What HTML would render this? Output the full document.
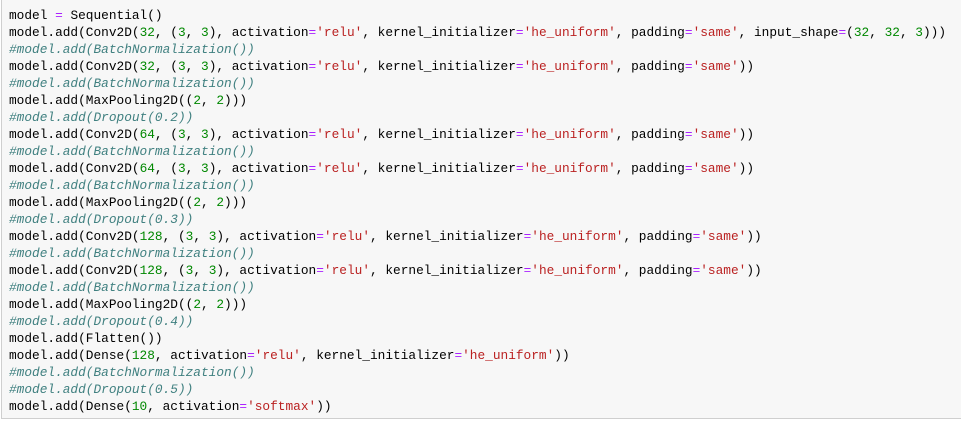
<!DOCTYPE html>
<html><head><meta charset="utf-8"><style>
html,body{margin:0;padding:0;background:#fff;width:961px;height:422px;overflow:hidden}
.cell{position:absolute;left:1px;top:-1px;width:970px;height:420px;background:#f7f7f7;border:1px solid #cfcfcf;box-sizing:border-box}
pre{margin:0;position:absolute;left:7px;top:7px;font-family:"Liberation Mono",monospace;font-size:12.8px;line-height:17px;color:#000}
.o{color:#aa22ff}.n{color:#008800}.s{color:#ba2121}.c{color:#408080;font-style:italic}
</style></head><body><div class="cell"><pre>model <span class="o">=</span> Sequential()
model.add(Conv2D(<span class="n">32</span>, (<span class="n">3</span>, <span class="n">3</span>), activation<span class="o">=</span><span class="s">'relu'</span>, kernel_initializer<span class="o">=</span><span class="s">'he_uniform'</span>, padding<span class="o">=</span><span class="s">'same'</span>, input_shape<span class="o">=</span>(<span class="n">32</span>, <span class="n">32</span>, <span class="n">3</span>)))
<span class="c">#model.add(BatchNormalization())</span>
model.add(Conv2D(<span class="n">32</span>, (<span class="n">3</span>, <span class="n">3</span>), activation<span class="o">=</span><span class="s">'relu'</span>, kernel_initializer<span class="o">=</span><span class="s">'he_uniform'</span>, padding<span class="o">=</span><span class="s">'same'</span>))
<span class="c">#model.add(BatchNormalization())</span>
model.add(MaxPooling2D((<span class="n">2</span>, <span class="n">2</span>)))
<span class="c">#model.add(Dropout(0.2))</span>
model.add(Conv2D(<span class="n">64</span>, (<span class="n">3</span>, <span class="n">3</span>), activation<span class="o">=</span><span class="s">'relu'</span>, kernel_initializer<span class="o">=</span><span class="s">'he_uniform'</span>, padding<span class="o">=</span><span class="s">'same'</span>))
<span class="c">#model.add(BatchNormalization())</span>
model.add(Conv2D(<span class="n">64</span>, (<span class="n">3</span>, <span class="n">3</span>), activation<span class="o">=</span><span class="s">'relu'</span>, kernel_initializer<span class="o">=</span><span class="s">'he_uniform'</span>, padding<span class="o">=</span><span class="s">'same'</span>))
<span class="c">#model.add(BatchNormalization())</span>
model.add(MaxPooling2D((<span class="n">2</span>, <span class="n">2</span>)))
<span class="c">#model.add(Dropout(0.3))</span>
model.add(Conv2D(<span class="n">128</span>, (<span class="n">3</span>, <span class="n">3</span>), activation<span class="o">=</span><span class="s">'relu'</span>, kernel_initializer<span class="o">=</span><span class="s">'he_uniform'</span>, padding<span class="o">=</span><span class="s">'same'</span>))
<span class="c">#model.add(BatchNormalization())</span>
model.add(Conv2D(<span class="n">128</span>, (<span class="n">3</span>, <span class="n">3</span>), activation<span class="o">=</span><span class="s">'relu'</span>, kernel_initializer<span class="o">=</span><span class="s">'he_uniform'</span>, padding<span class="o">=</span><span class="s">'same'</span>))
<span class="c">#model.add(BatchNormalization())</span>
model.add(MaxPooling2D((<span class="n">2</span>, <span class="n">2</span>)))
<span class="c">#model.add(Dropout(0.4))</span>
model.add(Flatten())
model.add(Dense(<span class="n">128</span>, activation<span class="o">=</span><span class="s">'relu'</span>, kernel_initializer<span class="o">=</span><span class="s">'he_uniform'</span>))
<span class="c">#model.add(BatchNormalization())</span>
<span class="c">#model.add(Dropout(0.5))</span>
model.add(Dense(<span class="n">10</span>, activation<span class="o">=</span><span class="s">'softmax'</span>))</pre></div></body></html>
